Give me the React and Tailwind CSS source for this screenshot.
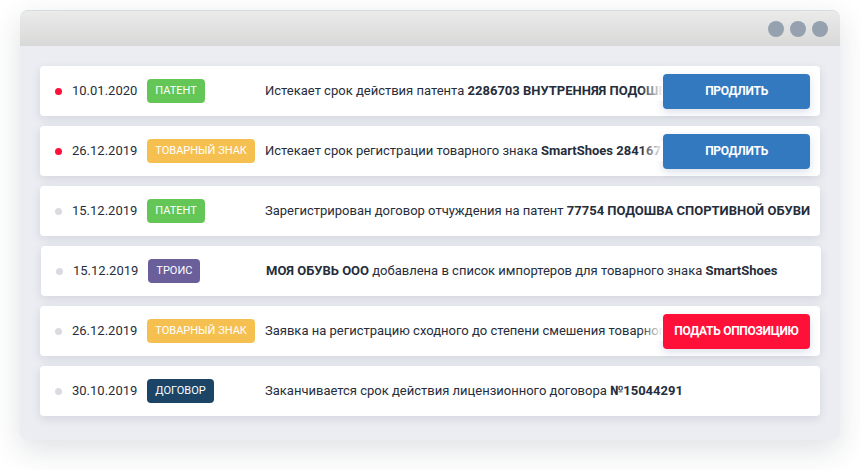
import React from "react";

const BADGES = {
  patent: { label: "Патент", cls: "bg-[#63c656]" },
  tm: { label: "Товарный знак", cls: "bg-[#f5c04f]" },
  trois: { label: "Троис", cls: "bg-[#6a5e9b]" },
  contract: { label: "Договор", cls: "bg-[#1b4466]" },
};

const ROWS = [
  {
    date: "10.01.2020",
    hot: true,
    badge: "patent",
    text: (
      <>
        Истекает срок действия патента <b className="font-bold">2286703 ВНУТРЕННЯЯ ПОДОШВА ДЛЯ ОБУВИ</b>
      </>
    ),
    action: { label: "Продлить", cls: "bg-[#3279c0]" },
  },
  {
    date: "26.12.2019",
    hot: true,
    badge: "tm",
    text: (
      <>
        Истекает срок регистрации товарного знака <b className="font-bold">SmartShoes 284167</b>
      </>
    ),
    action: { label: "Продлить", cls: "bg-[#3279c0]" },
  },
  {
    date: "15.12.2019",
    badge: "patent",
    text: (
      <>
        Зарегистрирован договор отчуждения на патент <b className="font-bold">77754 ПОДОШВА СПОРТИВНОЙ ОБУВИ</b>
      </>
    ),
  },
  {
    date: "15.12.2019",
    badge: "trois",
    shift: true,
    text: (
      <>
        <b className="font-bold">МОЯ ОБУВЬ ООО</b> добавлена в список импортеров для товарного знака{" "}
        <b className="font-bold">SmartShoes</b>
      </>
    ),
  },
  {
    date: "26.12.2019",
    badge: "tm",
    text: <>Заявка на регистрацию сходного до степени смешения товарного знака</>,
    action: { label: "Подать оппозицию", cls: "bg-[#ff1039]" },
  },
  {
    date: "30.10.2019",
    badge: "contract",
    text: (
      <>
        Заканчивается срок действия лицензионного договора <b className="font-bold">№15044291</b>
      </>
    ),
  },
];

function Row({ row }) {
  const badge = BADGES[row.badge];
  return (
    <div
      className={`flex h-[50px] items-center rounded-[4px] bg-white shadow-[0_3px_10px_rgba(40,50,80,0.12)] ${
        row.shift ? "ml-[1px] mr-[-1px]" : ""
      }`}
    >
      <div className="flex w-[225px] shrink-0 items-center pl-[15px]">
        <span className={`h-[7px] w-[7px] rounded-full ${row.hot ? "bg-[#ff1039]" : "bg-[#d9dbe1]"}`} />
        <span className="ml-[10px] text-[13px] text-[#262d3b]">{row.date}</span>
        <span
          className={`ml-[10px] flex h-[24px] items-center rounded-[4px] px-[8px] text-[11px] uppercase text-white ${badge.cls}`}
        >
          {badge.label}
        </span>
      </div>
      <div className="relative min-w-0 flex-1 overflow-hidden whitespace-nowrap text-[13px] text-[#262d3b]">
        {row.text}
        {row.action ? (
          <div className="absolute right-0 top-0 h-full w-[22px] bg-gradient-to-r from-white/0 to-white" />
        ) : null}
      </div>
      {row.action ? (
        <button
          type="button"
          className={`mr-[10px] flex h-[35px] w-[147px] shrink-0 items-center justify-center rounded-[4px] text-[12px] font-bold uppercase tracking-[-0.025em] text-white shadow-[0_3px_8px_rgba(50,80,140,0.18)] ${row.action.cls}`}
        >
          {row.action.label}
        </button>
      ) : (
        <div className="w-[10px] shrink-0" />
      )}
    </div>
  );
}

export default function App() {
  return (
    <div className="h-[470px] w-[860px] bg-white pt-[10px] font-['Roboto','Liberation_Sans',sans-serif]">
      <div className="mx-[20px] w-[820px] overflow-hidden rounded-[8px] border-t border-[#d3dce2] bg-[#ebedf2] shadow-[0_10px_30px_rgba(30,40,60,0.14)]">
        <div className="flex h-[35px] items-center justify-end gap-[6px] bg-gradient-to-b from-[#ebebea] to-[#d8d8d8] pr-[12px]">
          <span className="h-[16px] w-[16px] rounded-full bg-[#95a1ae]" />
          <span className="h-[16px] w-[16px] rounded-full bg-[#95a1ae]" />
          <span className="h-[16px] w-[16px] rounded-full bg-[#95a1ae]" />
        </div>
        <div className="flex flex-col gap-[10px] px-[20px] pb-[24px] pt-[20px]">
          {ROWS.map((row, i) => (
            <Row key={i} row={row} />
          ))}
        </div>
      </div>
    </div>
  );
}
